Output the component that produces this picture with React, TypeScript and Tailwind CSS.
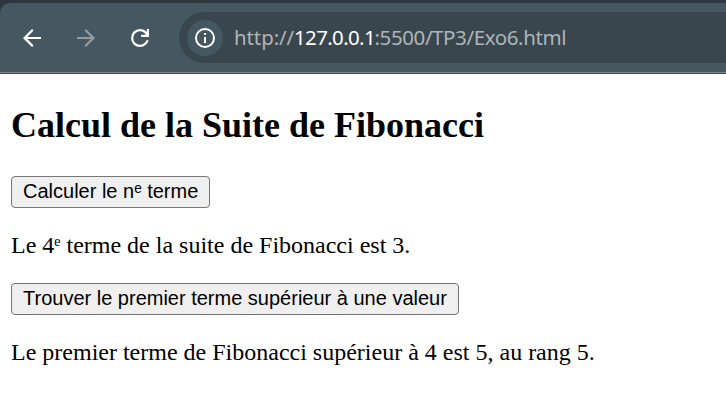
import React from "react";

function NavIcon({ path, color }: { path: string; color: string }) {
  return (
    <svg width="28" height="28" viewBox="-17.8 -977.8 995.6 995.6" fill={color} className="shrink-0">
      <path d={path} />
    </svg>
  );
}

function Toolbar() {
  return (
    <header className="h-[74px] bg-[#2b373c] pt-[3px]">
      <div className="flex h-[71px] items-start rounded-tl-[10px] border-b border-[#3f4e55] bg-[#455760]">
        <div className="flex h-[70px] w-full items-start border-b border-[#73828c]">
          <nav className="flex w-[179px] shrink-0 gap-[26px] pl-[18px] pt-[21px]">
            <NavIcon color="#fff" path="m313-440 224 224-57 56-320-320 320-320 57 56-224 224h487v80H313Z" />
            <NavIcon color="#929ba0" path="M647-440H160v-80h487L423-744l57-56 320 320-320 320-57-56 224-224Z" />
            <NavIcon
              color="#fff"
              path="M480-160q-134 0-227-93t-93-227q0-134 93-227t227-93q69 0 132 28.5T720-690v-110h80v280H520v-80h168q-32-56-87.5-88T480-720q-100 0-170 70t-70 170q0 100 70 170t170 70q77 0 139-44t87-116h84q-28 106-114 173t-196 67Z"
            />
          </nav>
          <div className="mt-[9px] flex h-[51px] flex-1 items-center rounded-l-full bg-[#3a464d] pl-[8px]">
            <div className="flex size-[36px] items-center justify-center rounded-full bg-[#455760]">
              <svg width="22" height="22" viewBox="0 0 22 22" fill="none" stroke="#fff" strokeWidth="2">
                <circle cx="11" cy="11" r="9" />
                <path d="M11 10v6M11 6v2.1" />
              </svg>
            </div>
            <div className="ml-[11px] flex whitespace-pre pb-px font-['Noto_Sans','Open_Sans',sans-serif] text-[20.5px] leading-[30px] text-[#afb5b8]">
              <span className="w-[60px] tracking-[-0.1px]">http://</span>
              <span className="w-[80.5px] tracking-[-0.65px] text-white">127.0.0.1</span>
              <span className="tracking-[-0.4px]">:5500/TP3/Exo6.html</span>
            </div>
          </div>
        </div>
      </div>
    </header>
  );
}

function ActionButton({ children }: { children: React.ReactNode }) {
  return (
    <button className="block h-8 rounded-[4px] border border-[#767676] bg-[#efefef] px-[11px] pb-px font-['Liberation_Sans',Arial,sans-serif] text-[20px] leading-[29px] whitespace-nowrap">
      {children}
    </button>
  );
}

export default function App() {
  return (
    <div className="h-[403px] overflow-hidden bg-white text-black">
      <Toolbar />
      <main className="pl-[11px] pt-[31px] font-['Liberation_Serif','Times_New_Roman',serif] text-[24px] leading-[27px]">
        <h2 className="mb-[30px] text-[36px] font-bold leading-[41px]">Calcul de la Suite de Fibonacci</h2>
        <ActionButton>Calculer le nᵉ terme</ActionButton>
        <p className="my-6">Le 4ᵉ terme de la suite de Fibonacci est 3.</p>
        <ActionButton>Trouver le premier terme supérieur à une valeur</ActionButton>
        <p className="my-6">Le premier terme de Fibonacci supérieur à 4 est 5, au rang 5.</p>
      </main>
    </div>
  );
}
